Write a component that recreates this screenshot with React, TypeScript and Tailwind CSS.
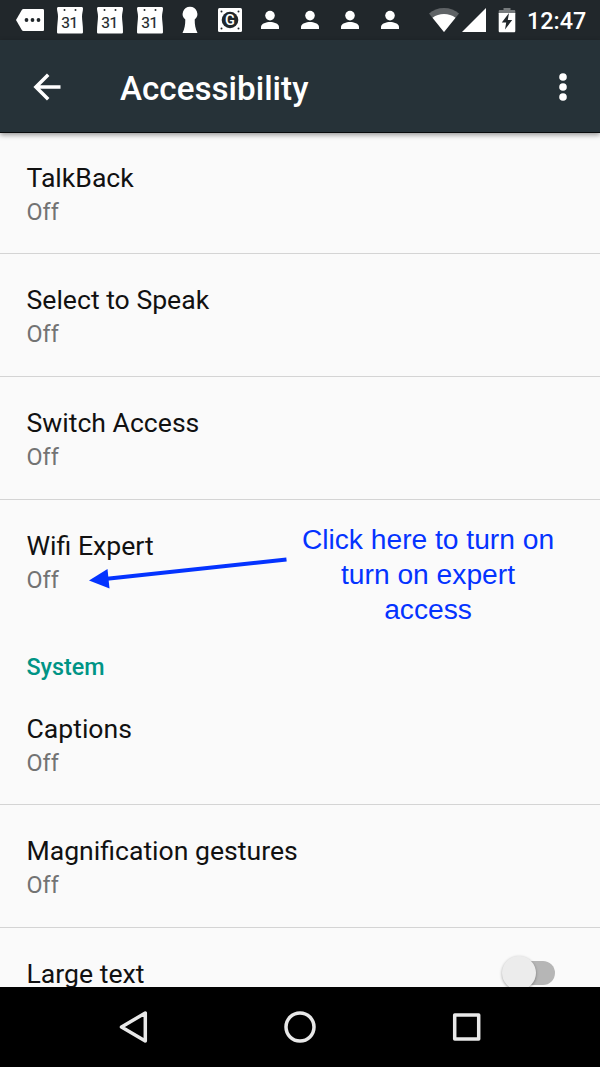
import React from "react";

function Calendar() {
  return (
    <svg width="40" height="40" viewBox="0 0 40 40">
      <path
        d="M8.500 7h23c1 0 1.500.6 1.500 1.500 0 3-1 4.500-1 8s1 8.500 1 15.500c0 1-.6 1.500-1.500 1.500h-23C7.500 33.500 7 33 7 32c0-7 1-12 1-15.500S7 11.500 7 8.500C7 7.600 7.500 7 8.500 7z"
        fill="#fff"
      />
      <circle cx="14.500" cy="10" r="1" fill="#21272b" />
      <circle cx="25.500" cy="10" r="1" fill="#21272b" />
      <text x="19.500" y="27.700" textAnchor="middle" fontFamily="Roboto, sans-serif" fontSize="15.500" fontWeight="400" fill="#21272b" stroke="#21272b" strokeWidth="0.200" letterSpacing="-0.500">
        31
      </text>
    </svg>
  );
}

function Person() {
  return (
    <svg width="40" height="40" viewBox="0 0 40 40" fill="#fff">
      <circle cx="20" cy="15.600" r="4.800" />
      <path d="M11 29v-2.200c0-3.200 5.500-4.800 9-4.800s9 1.600 9 4.800V29z" />
    </svg>
  );
}

function StatusBar() {
  return (
    <div className="flex h-10 shrink-0 items-center bg-[#21272b] pl-[10px]">
      <svg width="40" height="40" viewBox="0 0 40 40">
        <path d="M13.500 9H32.500c1 0 1.500.5 1.500 1.500v19c0 1-.5 1.500-1.500 1.500H13.500c-.8 0-1.300-.3-1.700-.9L6 20l5.800-10.100c.4-.6.900-.9 1.700-.9z" fill="#fff" />
        <circle cx="16.500" cy="20" r="1.900" fill="#21272b" />
        <circle cx="22.500" cy="20" r="1.900" fill="#21272b" />
        <circle cx="28.500" cy="20" r="1.900" fill="#21272b" />
      </svg>
      <Calendar />
      <Calendar />
      <Calendar />
      <svg width="40" height="40" viewBox="0 0 40 40" fill="#fff">
        <path d="M20 6.700a7.300 7.300 0 0 1 4.700 12.900C24.700 25 25.300 28.500 27.500 33h-15c2.200-4.500 2.800-8 2.800-13.400A7.300 7.300 0 0 1 20 6.700z" />
      </svg>
      <svg width="40" height="40" viewBox="0 0 40 40">
        <rect x="8" y="8" width="24" height="24" rx="1.500" fill="#fff" />
        <circle cx="20" cy="20" r="8.300" fill="#21272b" />
        <circle cx="11.500" cy="11.500" r="1" fill="#21272b" />
        <circle cx="28.500" cy="11.500" r="1" fill="#21272b" />
        <circle cx="11.500" cy="28.500" r="1" fill="#21272b" />
        <circle cx="28.500" cy="28.500" r="1" fill="#21272b" />
        <text x="20" y="25" textAnchor="middle" fontFamily="Roboto, sans-serif" fontSize="14.500" fontWeight="500" fill="#fff">
          G
        </text>
      </svg>
      <Person />
      <Person />
      <Person />
      <Person />
      <svg className="ml-[18px]" width="32" height="40" viewBox="0 0 32 40">
        <path d="M1 13.500C5 10 10 8 16 8s11 2 15 5.500L16 32z" fill="#5f6366" />
        <path d="M4.500 17.700C8 15.200 11.500 14 16 14s8 1.200 11.500 3.700L16 32z" fill="#fff" />
      </svg>
      <svg className="ml-[2px]" width="24" height="40" viewBox="0 0 24 40">
        <path d="M24 8v24H0z" fill="#fff" />
      </svg>
      <svg className="ml-[12px]" width="18" height="40" viewBox="0 0 18 40">
        <path d="M5.500 8h7v2H16c.8 0 1.300.5 1.300 1.300V14H.7v-2.700C.7 10.500 1.200 10 2 10h3.500z" fill="#777b7d" />
        <path d="M.7 13h16.600v18c0 .8-.5 1.300-1.300 1.300H2c-.8 0-1.300-.5-1.300-1.300z" fill="#fff" />
        <path d="M11 13 3.800 22.500h4.400L7 29.500l7.200-9.500H9.800z" fill="#21272b" />
      </svg>
      <span className="ml-[11px] mt-[1px] text-[23.33px] font-medium leading-10 text-white">12:47</span>
    </div>
  );
}

function Header() {
  return (
    <header className="relative z-10 flex h-[93px] shrink-0 items-center border-b border-[#080a0b] bg-[#263238] text-white shadow-[0_2px_5px_rgba(0,0,0,0.4)]">
      <svg className="ml-[33px] mt-[1px]" width="28" height="28" viewBox="0 0 28 28" fill="none" stroke="#fff" strokeWidth="3.500">
        <path d="M27.500 14H3M15.200 1.700 2.900 14l12.300 12.300" />
      </svg>
      <h1 className="ml-[59px] mt-[5px] text-[33.2px] font-medium leading-[40px]">Accessibility</h1>
      <svg className="ml-auto mr-[33px] mt-[2px]" width="8" height="28" viewBox="0 0 8 28" fill="#fff">
        <circle cx="4" cy="4" r="3.800" />
        <circle cx="4" cy="14" r="3.800" />
        <circle cx="4" cy="24" r="3.800" />
      </svg>
    </header>
  );
}

interface RowProps {
  title: string;
  className?: string;
  children?: React.ReactNode;
}

function Row({ title, className = "h-[123px] border-[#d4d4d4] pt-[30px]", children }: RowProps) {
  return (
    <div className={`relative shrink-0 border-b pl-[26.5px] ${className}`}>
      <div className="text-[26.6px] leading-8 text-[#111]">{title}</div>
      <div className="text-[23.33px] leading-9 text-[#737373]">Off</div>
      {children}
    </div>
  );
}

function Annotation() {
  return (
    <>
      <svg className="absolute left-[88px] top-[54px]" width="200" height="38" viewBox="88 554 200 38">
        <path d="M286.500 559.500 107 578.700" stroke="#0433ff" strokeWidth="4" />
        <path d="M89 580.500 107.500 569l2 19.500z" fill="#0433ff" />
      </svg>
      <p className="absolute left-[298px] top-[22px] w-[260px] text-center font-['Liberation_Sans',Arial,sans-serif] text-[28.2px] leading-[35px] text-[#0433ff]">
        Click here to turn on
        <br />
        turn on expert
        <br />
        access
      </p>
    </>
  );
}

export default function App() {
  return (
    <div className="flex h-[1067px] w-[600px] flex-col overflow-hidden bg-[#fafafa] font-[Roboto,sans-serif]">
      <StatusBar />
      <Header />
      <main className="-mt-[2px] flex min-h-0 flex-1 flex-col overflow-hidden">
        <Row title="TalkBack" className="h-[123px] border-[#d4d4d4] pt-[31px]" />
        <Row title="Select to Speak" />
        <Row title="Switch Access" />
        <Row title="Wifi Expert" className="h-[123px] border-transparent pt-[30px]">
          <Annotation />
        </Row>
        <h2 className="h-[60px] shrink-0 pl-[26.5px] pt-[26px] text-[23.33px] font-medium leading-9 text-[#009485]">System</h2>
        <Row title="Captions" className="h-[122px] border-[#d4d4d4] pt-[30px]" />
        <Row title="Magnification gestures" />
        <div className="flex h-[123px] shrink-0 items-start justify-between pl-[26.5px] pr-[45px] pt-[30px]">
          <span className="text-[26.6px] leading-8 text-[#111]">Large text</span>
          <span className="relative mt-[3px] h-6 w-[44px] rounded-full bg-[#b6b6b6]">
            <span className="absolute -left-[9px] -top-[5px] size-[34px] rounded-full bg-[#ececec] shadow-[0_1px_3px_rgba(0,0,0,0.35)]" />
          </span>
        </div>
      </main>
      <nav className="flex h-[80px] shrink-0 items-center justify-between bg-black pl-[117px] pr-[117px]">
        <svg width="33" height="34" viewBox="0 0 33 34" fill="none" stroke="#e8e8e8" strokeWidth="3.500" strokeLinejoin="round">
          <path d="M28.300 3v28L4.500 17z" />
        </svg>
        <svg width="34" height="34" viewBox="0 0 34 34" fill="none" stroke="#e8e8e8" strokeWidth="3.500">
          <circle cx="17" cy="17" r="14" />
        </svg>
        <svg width="33" height="34" viewBox="0 0 33 34" fill="none" stroke="#e8e8e8" strokeWidth="3.500" strokeLinejoin="round">
          <path d="M4.700 5h24v24h-24z" />
        </svg>
      </nav>
    </div>
  );
}
